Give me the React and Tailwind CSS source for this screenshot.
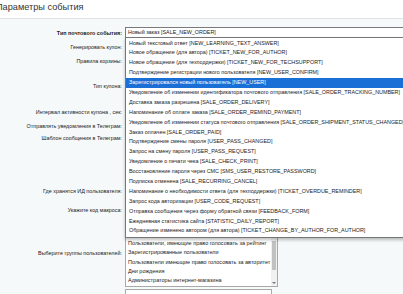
import React from 'react';

const events = [
  'Новый текстовый ответ [NEW_LEARNING_TEXT_ANSWER]',
  'Новое обращение (для автора) [TICKET_NEW_FOR_AUTHOR]',
  'Новое обращение (для техподдержки) [TICKET_NEW_FOR_TECHSUPPORT]',
  'Подтверждение регистрации нового пользователя [NEW_USER_CONFIRM]',
  'Зарегистрировался новый пользователь [NEW_USER]',
  'Уведомление об изменении идентификатора почтового отправления [SALE_ORDER_TRACKING_NUMBER]',
  'Доставка заказа разрешена [SALE_ORDER_DELIVERY]',
  'Напоминание об оплате заказа [SALE_ORDER_REMIND_PAYMENT]',
  'Уведомление об изменении статуса почтового отправления [SALE_ORDER_SHIPMENT_STATUS_CHANGED]',
  'Заказ оплачен [SALE_ORDER_PAID]',
  'Подтверждение смены пароля [USER_PASS_CHANGED]',
  'Запрос на смену пароля [USER_PASS_REQUEST]',
  'Уведомление о печати чека [SALE_CHECK_PRINT]',
  'Восстановление пароля через СМС [SMS_USER_RESTORE_PASSWORD]',
  'Подписка отменена [SALE_RECURRING_CANCEL]',
  'Напоминание о необходимости ответа (для техподдержки) [TICKET_OVERDUE_REMINDER]',
  'Запрос кода авторизации [USER_CODE_REQUEST]',
  'Отправка сообщения через форму обратной связи [FEEDBACK_FORM]',
  'Ежедневная статистика сайта [STATISTIC_DAILY_REPORT]',
  'Обращение изменено автором (для автора) [TICKET_CHANGE_BY_AUTHOR_FOR_AUTHOR]',
];

const groups = [
  'Пользователи, имеющие право голосовать за рейтинг',
  'Зарегистрированные пользователи',
  'Пользователи имеющие право голосовать за авторитет',
  'Дни рождения',
  'Администраторы интернет-магазина',
];

const Row = ({ label, h, bold, pt = 'pt-0', children }) => (
  <div className={`flex ${h}`}>
    <div className={`w-[122px] shrink-0 flex justify-end whitespace-nowrap leading-[10px] ${pt} ${bold ? 'font-bold' : ''}`}>
      <span>{label}</span>
    </div>
    <div className="ml-[3px] flex-1 min-w-0">{children}</div>
  </div>
);

const App = () => {
  return (
    <div className="relative w-[403px] h-[294px] overflow-hidden bg-[#f5f9f9] text-[5.4px] text-[#222] font-['Liberation_Sans',Arial,sans-serif]">
      <div className="h-[19px] bg-white border-b border-[#dfe5e7] pt-[1px] text-[9.2px] leading-[12px] text-[#333] -ml-[4px]">
        Параметры события
      </div>

      <div className="pt-[8px]">
        <Row label="Тип почтового события:" h="h-[14px]" bold pt="pt-[1px]">
          <div className="h-[11px] w-[300px] bg-white border border-[#7a7a7a] pl-[2px] leading-[9px] text-[5.4px]">
            Новый заказ [SALE_NEW_ORDER]
          </div>
        </Row>
        <Row label="Генерировать купон:" h="h-[14px]" pt="pt-[1px]" />
        <Row label="Правила корзины:" h="h-[26px]" pt="pt-[1px]" />
        <Row label="Тип купона:" h="h-[26px]" />
        <Row label="Интервал активности купона , сек:" h="h-[14px]" />
        <Row label="Отправлять уведомления в Телеграм:" h="h-[12px]" />
        <Row label="Шаблон сообщения в Телеграм:" h="h-[53px]" />
        <Row label="Где хранятся ИД пользователя:" h="h-[19px]" />
        <Row label="Укажите код макроса:" h="h-[32px]" />
        <Row label="Выберите группы пользователей:" h="h-[52px]" pt="pt-[11px]">
          <div className="flex h-[50px] w-[153px] bg-white border border-[#a9a9a9] text-[5.5px]">
            <div className="flex-1 min-w-0 overflow-hidden pl-[2px] pt-[1px]">
              {groups.map((g) => (
                <div key={g} className="h-[9.25px] leading-[9.25px] whitespace-nowrap">{g}</div>
              ))}
            </div>
            <div className="w-[6px] shrink-0 bg-[#f1f1f1] flex flex-col items-center py-[1px]">
              <div className="w-[4px] h-[29px] mt-[2px] bg-[#c1c1c1]" />
              <div className="mt-auto mb-[1px] w-0 h-0 border-l-[2px] border-r-[2px] border-t-[2px] border-l-transparent border-r-transparent border-t-[#777]" />
            </div>
          </div>
        </Row>
        <Row label="" h="h-[10px]">
          <div className="h-[10px] w-[147px] bg-white border border-[#a9a9a9]" />
        </Row>
      </div>

      <div className="absolute left-[125px] top-[37px] w-[300px] bg-white border border-[#767676] shadow-[0_2px_3px_rgba(0,0,0,0.25)] py-[0.5px] text-[5.4px]">
        {events.map((e, i) => (
          <div
            key={e}
            className={`h-[9.9px] leading-[9.9px] pl-[3px] whitespace-nowrap ${i === 4 ? 'bg-[#1a6fd6] text-white' : ''}`}
          >
            {e}
          </div>
        ))}
      </div>
    </div>
  );
};

export default App;
